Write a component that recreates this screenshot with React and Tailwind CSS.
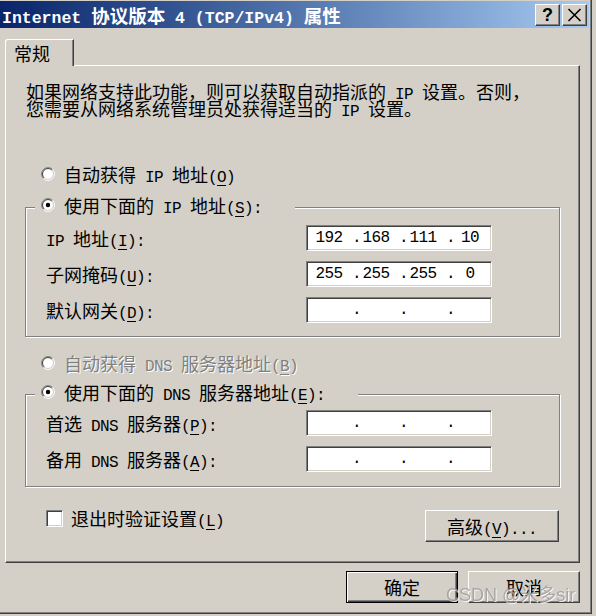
import React from "react";

const CJK = "font-['Noto_Sans_CJK_SC',sans-serif] text-[18px]";
const LAT = "font-['Liberation_Mono',monospace] text-[16px] tracking-[-0.6px] leading-[8px]";
const CJK_TITLE = "font-['Noto_Sans_CJK_SC',sans-serif] text-[18.5px] font-bold";
const LAT_TITLE = "font-['Liberation_Mono',monospace] text-[16.5px] font-bold leading-[8px]";

const CJK_RE = /([\u3000-\u303f\u4e00-\u9fff\uff00-\uffef]+)/;

// "&X" marks the accelerator letter, drawn underlined like a Win32 label
function accel(str) {
  return str.split(/(&.)/).map((p, i) =>
    p.startsWith("&") && p.length === 2 ? (
      <span key={i} className="underline underline-offset-[3px] decoration-1">
        {p[1]}
      </span>
    ) : (
      p
    )
  );
}

function T({ s, cjk = CJK, lat = LAT, className = "" }) {
  const parts = s.split(CJK_RE).filter(Boolean);
  return (
    <span className={`whitespace-pre ${className}`}>
      {parts.map((p, i) =>
        CJK_RE.test(p) ? (
          <span key={i} className={cjk}>
            {p}
          </span>
        ) : (
          <span key={i} className={lat}>
            {accel(p)}
          </span>
        )
      )}
    </span>
  );
}

function Radio({ checked }) {
  return (
    <svg width="14" height="14" viewBox="0 0 14 14" className="shrink-0">
      <circle cx="7" cy="7" r="5.5" fill="#fff" />
      <path d="M2.404 11.596A6.5 6.5 0 0 1 11.596 2.404" fill="none" stroke="#808080" />
      <path d="M11.596 2.404A6.5 6.5 0 0 1 2.404 11.596" fill="none" stroke="#fff" />
      <path d="M3.111 10.889A5.5 5.5 0 0 1 10.889 3.111" fill="none" stroke="#404040" />
      <path d="M10.889 3.111A5.5 5.5 0 0 1 3.111 10.889" fill="none" stroke="#d4d0c8" />
      {checked && <circle cx="7" cy="7" r="2.2" fill="#000" />}
    </svg>
  );
}

function IpBox({ parts = ["", "", "", ""] }) {
  return (
    <div className="w-[186px] h-[26px] bg-white border border-t-[#808080] border-l-[#808080] border-r-white border-b-white shadow-[inset_1px_1px_0_#404040,inset_-1px_-1px_0_#d4d0c8] flex items-center pl-[7px] font-['Liberation_Mono',monospace] text-[16px] tracking-[-0.6px] leading-none">
      {parts.map((p, i) => (
        <React.Fragment key={i}>
          <span className="w-[30px] text-center">{p}</span>
          {i < 3 && <span className="w-[17px] text-right">.</span>}
        </React.Fragment>
      ))}
    </div>
  );
}

function Row({ label, parts }) {
  return (
    <div className="flex items-center h-[26px]">
      <div className="w-[260px] ml-[20px] leading-[18px]">
        <T s={label} />
      </div>
      <IpBox parts={parts} />
    </div>
  );
}

function Group({ legend, children, className = "", rowsClass = "mt-[10px]" }) {
  return (
    <div
      className={`ml-[19px] w-[535px] border border-[#808080] shadow-[inset_1px_1px_0_#fff,1px_1px_0_#fff] ${className}`}
    >
      <div className="-mt-[13px] ml-[9px] w-fit h-[20px] bg-[#d4d0c8] pl-[6px] pr-[33px] flex items-center gap-[9px] leading-[18px]">
        <Radio checked />
        <T s={legend} />
      </div>
      <div className={`flex flex-col gap-[10px] ${rowsClass}`}>{children}</div>
    </div>
  );
}

const raised =
  "bg-[#d4d0c8] border border-t-white border-l-white border-r-[#404040] border-b-[#404040] shadow-[inset_-1px_-1px_0_#808080]";

export default function App() {
  return (
    <div className="w-[596px] h-[616px] bg-[#d4d0c8] text-black overflow-hidden relative select-none font-['Noto_Sans_CJK_SC',sans-serif] text-[18px]">
      <div className="w-[592px] h-[614px] border-r border-b border-[#404040] shadow-[inset_-1px_-1px_0_#808080] flex flex-col">
        {/* title bar */}
        <div className="mt-px mr-[2px] h-[27px] bg-linear-to-r from-[#0a246a] to-[#a6caf0] flex items-center justify-between pl-[2px] pr-[2px]">
          <T
            s="Internet 协议版本 4 (TCP/IPv4) 属性"
            cjk={CJK_TITLE}
            lat={LAT_TITLE}
            className="text-white leading-[20px]"
          />
          <div className="flex gap-[2px]">
            <div className={`w-[25px] h-[22px] ${raised} flex items-center justify-center font-['Liberation_Sans',sans-serif] font-bold text-[18px] leading-none`}>
              ?
            </div>
            <div className={`w-[25px] h-[22px] ${raised} flex items-center justify-center`}>
              <svg width="15" height="14" viewBox="0 0 15 14">
                <path d="M1.5 1L13.5 13M13.5 1L1.5 13" stroke="#000" strokeWidth="1.6" fill="none" />
              </svg>
            </div>
          </div>
        </div>

        {/* tab */}
        <div className="mt-[11px] ml-[5px] w-[69px] h-[27px] -mb-px relative z-10 bg-[#d4d0c8] border-l border-t border-white border-r border-r-[#404040] shadow-[inset_-1px_0_0_#808080] rounded-tl-[3px] pl-[8px] flex items-center leading-[18px]">
          <T s="常规" />
        </div>

        {/* tab page */}
        <div className="ml-[5px] w-[575px] h-[498px] border border-white border-r-[#404040] border-b-[#404040] shadow-[inset_-1px_-1px_0_#808080] flex flex-col">
          <p className="ml-[20px] mt-[17px] leading-[17px]">
            <T s="如果网络支持此功能，则可以获取自动指派的 IP 设置。否则，" />
            <br />
            <T s="您需要从网络系统管理员处获得适当的 IP 设置。" />
          </p>

          <div className="mt-[47px] ml-[35px] h-[20px] flex items-center gap-[9px] leading-[18px]">
            <Radio />
            <T s="自动获得 IP 地址(&O)" />
          </div>

          <Group legend="使用下面的 IP 地址(&S):" className="mt-[23px] pb-[13px]">
            <Row label="IP 地址(&I):" parts={["192", "168", "111", "10"]} />
            <Row label="子网掩码(&U):" parts={["255", "255", "255", "0"]} />
            <Row label="默认网关(&D):" />
          </Group>

          <div className="mt-[16px] ml-[35px] h-[20px] flex items-center gap-[9px] leading-[18px]">
            <Radio />
            <T s="自动获得 DNS 服务器地址(&B)" className="text-[#808080] [text-shadow:1px_1px_0_#fff]" />
          </div>

          <Group
            legend="使用下面的 DNS 服务器地址(&E):"
            className="mt-[21px] pb-[14px]"
            rowsClass="mt-[8px]"
          >
            <Row label="首选 DNS 服务器(&P):" />
            <Row label="备用 DNS 服务器(&A):" />
          </Group>

          <div className="mt-[23px] flex items-start">
            <div className="ml-[40px] h-[16px] flex items-center gap-[8px] leading-[18px]">
              <span className="w-[17px] h-[17px] bg-white border border-t-[#808080] border-l-[#808080] border-r-white border-b-white shadow-[inset_1px_1px_0_#404040,inset_-1px_-1px_0_#d4d0c8]" />
              <T s="退出时验证设置(&L)" />
            </div>
            <div className={`ml-auto mr-[20px] w-[134px] h-[32px] ${raised} flex items-center justify-center leading-[18px]`}>
              <T s="高级(&V)..." />
            </div>
          </div>
        </div>

        {/* dialog buttons */}
        <div className="mt-[8px] ml-[5px] w-[575px] flex justify-end gap-[10px]">
          <div className="w-[112px] h-[32px] bg-[#d4d0c8] border border-black shadow-[inset_1px_1px_0_#fff,inset_-1px_-1px_0_#404040,inset_-2px_-2px_0_#808080] flex items-center justify-center leading-[18px]">
            <T s="确定" />
          </div>
          <div className={`w-[112px] h-[32px] ${raised} flex items-center justify-center leading-[18px]`}>
            <T s="取消" />
          </div>
        </div>
      </div>

      {/* watermark */}
      <div className="absolute left-[446px] top-[584px] font-['Liberation_Sans','Noto_Sans_CJK_SC',sans-serif] text-[18px] leading-[22px] text-[#9c9c9c] opacity-80 [text-shadow:1px_1px_0_#fff]">
        CSDN @米多sir
      </div>
    </div>
  );
}
